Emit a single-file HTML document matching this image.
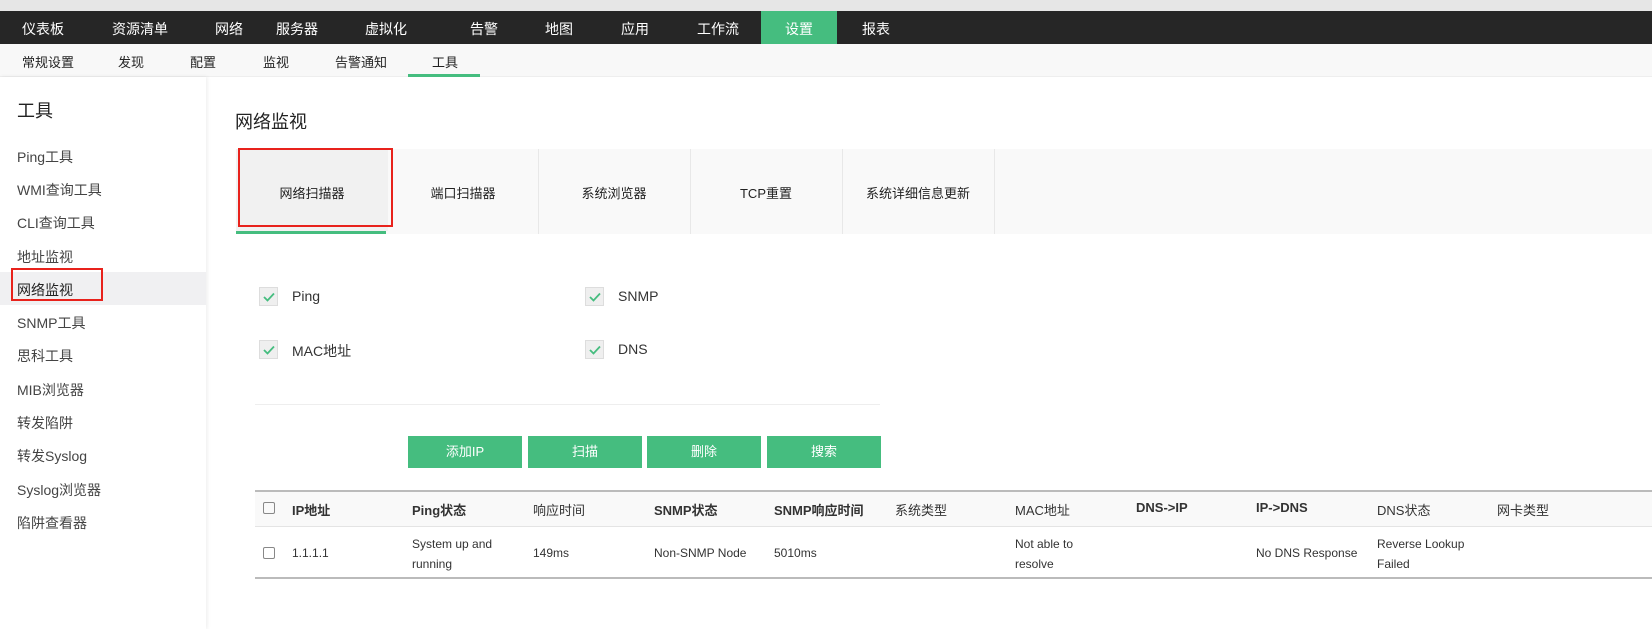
<!DOCTYPE html>
<html><head><meta charset="utf-8"><style>
*{margin:0;padding:0;box-sizing:border-box}
body{width:1652px;height:629px;overflow:hidden;background:#fff;font-family:"Liberation Sans","Noto Sans CJK SC",sans-serif;color:#222;position:relative}
.a{position:absolute;white-space:nowrap}
#top{position:absolute;left:0;top:0;width:1652px;height:11px;background:#e6e6e6}
#nav{position:absolute;left:0;top:11px;width:1652px;height:33px;background:#262626;color:#fff;font-size:14px}
#nav span{position:absolute;top:8px}
#sub{position:absolute;left:0;top:44px;width:1652px;height:33px;background:#f8f8f8;font-size:13px;border-bottom:1px solid #eee}
#sub span{position:absolute;top:8px}
#side{position:absolute;left:0;top:77px;width:206px;height:552px;background:#fff;box-shadow:1px 0 4px rgba(0,0,0,.08)}
.si{position:absolute;left:17px;font-size:14px;color:#444}
.cb{position:absolute;width:19px;height:19px;background:#efefef;border:1px solid #ddd}
.cb svg{position:absolute;left:3px;top:4px}
.btn{position:absolute;top:436px;width:114px;height:32px;background:#45bd7f;color:#fff;font-size:13px;text-align:center;line-height:32px}
.th{position:absolute;top:500px;font-size:13px;font-weight:bold;color:#333}
.td{position:absolute;font-size:12px;color:#333;line-height:20px}
.tc{position:absolute;width:12px;height:12px;border:1.5px solid #888;border-radius:2px;left:263px}
</style></head><body>
<div id="top"></div>
<div id="nav">
<div style="position:absolute;left:761px;top:0;width:76px;height:33px;background:#45bd7f"></div>
<span style="left:22px">仪表板</span><span style="left:112px">资源清单</span><span style="left:215px">网络</span><span style="left:276px">服务器</span><span style="left:365px">虚拟化</span><span style="left:470px">告警</span><span style="left:545px">地图</span><span style="left:621px">应用</span><span style="left:697px">工作流</span><span style="left:785px">设置</span><span style="left:862px">报表</span>
</div>
<div id="sub">
<span style="left:22px">常规设置</span><span style="left:118px">发现</span><span style="left:190px">配置</span><span style="left:263px">监视</span><span style="left:335px">告警通知</span><span style="left:432px">工具</span>
<div style="position:absolute;left:408px;top:30px;width:72px;height:3px;background:#45bd7f"></div>
</div>
<div id="side">
<div class="a" style="left:17px;top:20px;font-size:18px;color:#222">工具</div>
<div style="position:absolute;left:0;top:195px;width:206px;height:33px;background:#f0f0f2"></div>
<div class="si" style="top:70px">Ping工具</div>
<div class="si" style="top:103px">WMI查询工具</div>
<div class="si" style="top:136px">CLI查询工具</div>
<div class="si" style="top:170px">地址监视</div>
<div class="si" style="top:203px;color:#222">网络监视</div>
<div class="si" style="top:236px">SNMP工具</div>
<div class="si" style="top:269px">思科工具</div>
<div class="si" style="top:303px">MIB浏览器</div>
<div class="si" style="top:336px">转发陷阱</div>
<div class="si" style="top:369px">转发Syslog</div>
<div class="si" style="top:403px">Syslog浏览器</div>
<div class="si" style="top:436px">陷阱查看器</div>
<div style="position:absolute;left:11px;top:191px;width:92px;height:33px;border:2px solid #e8221c"></div>
</div>
<div class="a" style="left:235px;top:108px;font-size:18px">网络监视</div>
<div style="position:absolute;left:236px;top:149px;width:1416px;height:85px;background:#f9f9f9"></div>
<div style="position:absolute;left:236px;top:149px;width:152px;height:82px;background:#f1f1f1"></div>
<div style="position:absolute;left:236px;top:231px;width:150px;height:3px;background:#45bd7f"></div>
<div style="position:absolute;left:538px;top:149px;width:1px;height:85px;background:#e8e8e8"></div>
<div style="position:absolute;left:690px;top:149px;width:1px;height:85px;background:#e8e8e8"></div>
<div style="position:absolute;left:842px;top:149px;width:1px;height:85px;background:#e8e8e8"></div>
<div style="position:absolute;left:994px;top:149px;width:1px;height:85px;background:#e8e8e8"></div>
<div style="position:absolute;left:238px;top:148px;width:155px;height:79px;border:2px solid #e8221c"></div>
<div class="a" style="left:236px;width:152px;top:183px;font-size:13px;text-align:center">网络扫描器</div>
<div class="a" style="left:388px;width:150px;top:183px;font-size:13px;text-align:center">端口扫描器</div>
<div class="a" style="left:538px;width:152px;top:183px;font-size:13px;text-align:center">系统浏览器</div>
<div class="a" style="left:690px;width:152px;top:183px;font-size:13px;text-align:center">TCP重置</div>
<div class="a" style="left:842px;width:152px;top:183px;font-size:13px;text-align:center">系统详细信息更新</div>

<div class="cb" style="left:259px;top:287px"><svg width="12" height="10"><path d="M1 5 L4.5 8.5 L11 1.5" stroke="#45bd7f" stroke-width="1.8" fill="none"/></svg></div>
<div class="a" style="left:292px;top:288px;font-size:14px;color:#333">Ping</div>
<div class="cb" style="left:585px;top:287px"><svg width="12" height="10"><path d="M1 5 L4.5 8.5 L11 1.5" stroke="#45bd7f" stroke-width="1.8" fill="none"/></svg></div>
<div class="a" style="left:618px;top:288px;font-size:14px;color:#333">SNMP</div>
<div class="cb" style="left:259px;top:340px"><svg width="12" height="10"><path d="M1 5 L4.5 8.5 L11 1.5" stroke="#45bd7f" stroke-width="1.8" fill="none"/></svg></div>
<div class="a" style="left:292px;top:341px;font-size:14px;color:#333">MAC地址</div>
<div class="cb" style="left:585px;top:340px"><svg width="12" height="10"><path d="M1 5 L4.5 8.5 L11 1.5" stroke="#45bd7f" stroke-width="1.8" fill="none"/></svg></div>
<div class="a" style="left:618px;top:341px;font-size:14px;color:#333">DNS</div>
<div style="position:absolute;left:255px;top:404px;width:625px;height:1px;background:#eee"></div>

<div class="btn" style="left:408px">添加IP</div>
<div class="btn" style="left:528px">扫描</div>
<div class="btn" style="left:647px">删除</div>
<div class="btn" style="left:767px">搜索</div>

<div style="position:absolute;left:255px;top:490px;width:1397px;height:37px;background:#f9f9f9;border-top:2px solid #bbb;border-bottom:1px solid #e4e4e4"></div>
<div style="position:absolute;left:255px;top:577px;width:1397px;height:2px;background:#bbb"></div>
<div class="tc" style="top:502px"></div>
<div class="th" style="left:292px">IP地址</div>
<div class="th" style="left:412px">Ping状态</div>
<div class="th" style="left:533px;font-weight:normal">响应时间</div>
<div class="th" style="left:654px">SNMP状态</div>
<div class="th" style="left:774px">SNMP响应时间</div>
<div class="th" style="left:895px;font-weight:normal">系统类型</div>
<div class="th" style="left:1015px;font-weight:normal">MAC地址</div>
<div class="th" style="left:1136px">DNS-&gt;IP</div>
<div class="th" style="left:1256px">IP-&gt;DNS</div>
<div class="th" style="left:1377px;font-weight:normal">DNS状态</div>
<div class="th" style="left:1497px;font-weight:normal">网卡类型</div>

<div class="tc" style="top:547px"></div>
<div class="td" style="left:292px;top:543px">1.1.1.1</div>
<div class="td" style="left:412px;top:534px">System up and<br>running</div>
<div class="td" style="left:533px;top:543px">149ms</div>
<div class="td" style="left:654px;top:543px">Non-SNMP Node</div>
<div class="td" style="left:774px;top:543px">5010ms</div>
<div class="td" style="left:1015px;top:534px">Not able to<br>resolve</div>
<div class="td" style="left:1256px;top:543px">No DNS Response</div>
<div class="td" style="left:1377px;top:534px">Reverse Lookup<br>Failed</div>
</body></html>
